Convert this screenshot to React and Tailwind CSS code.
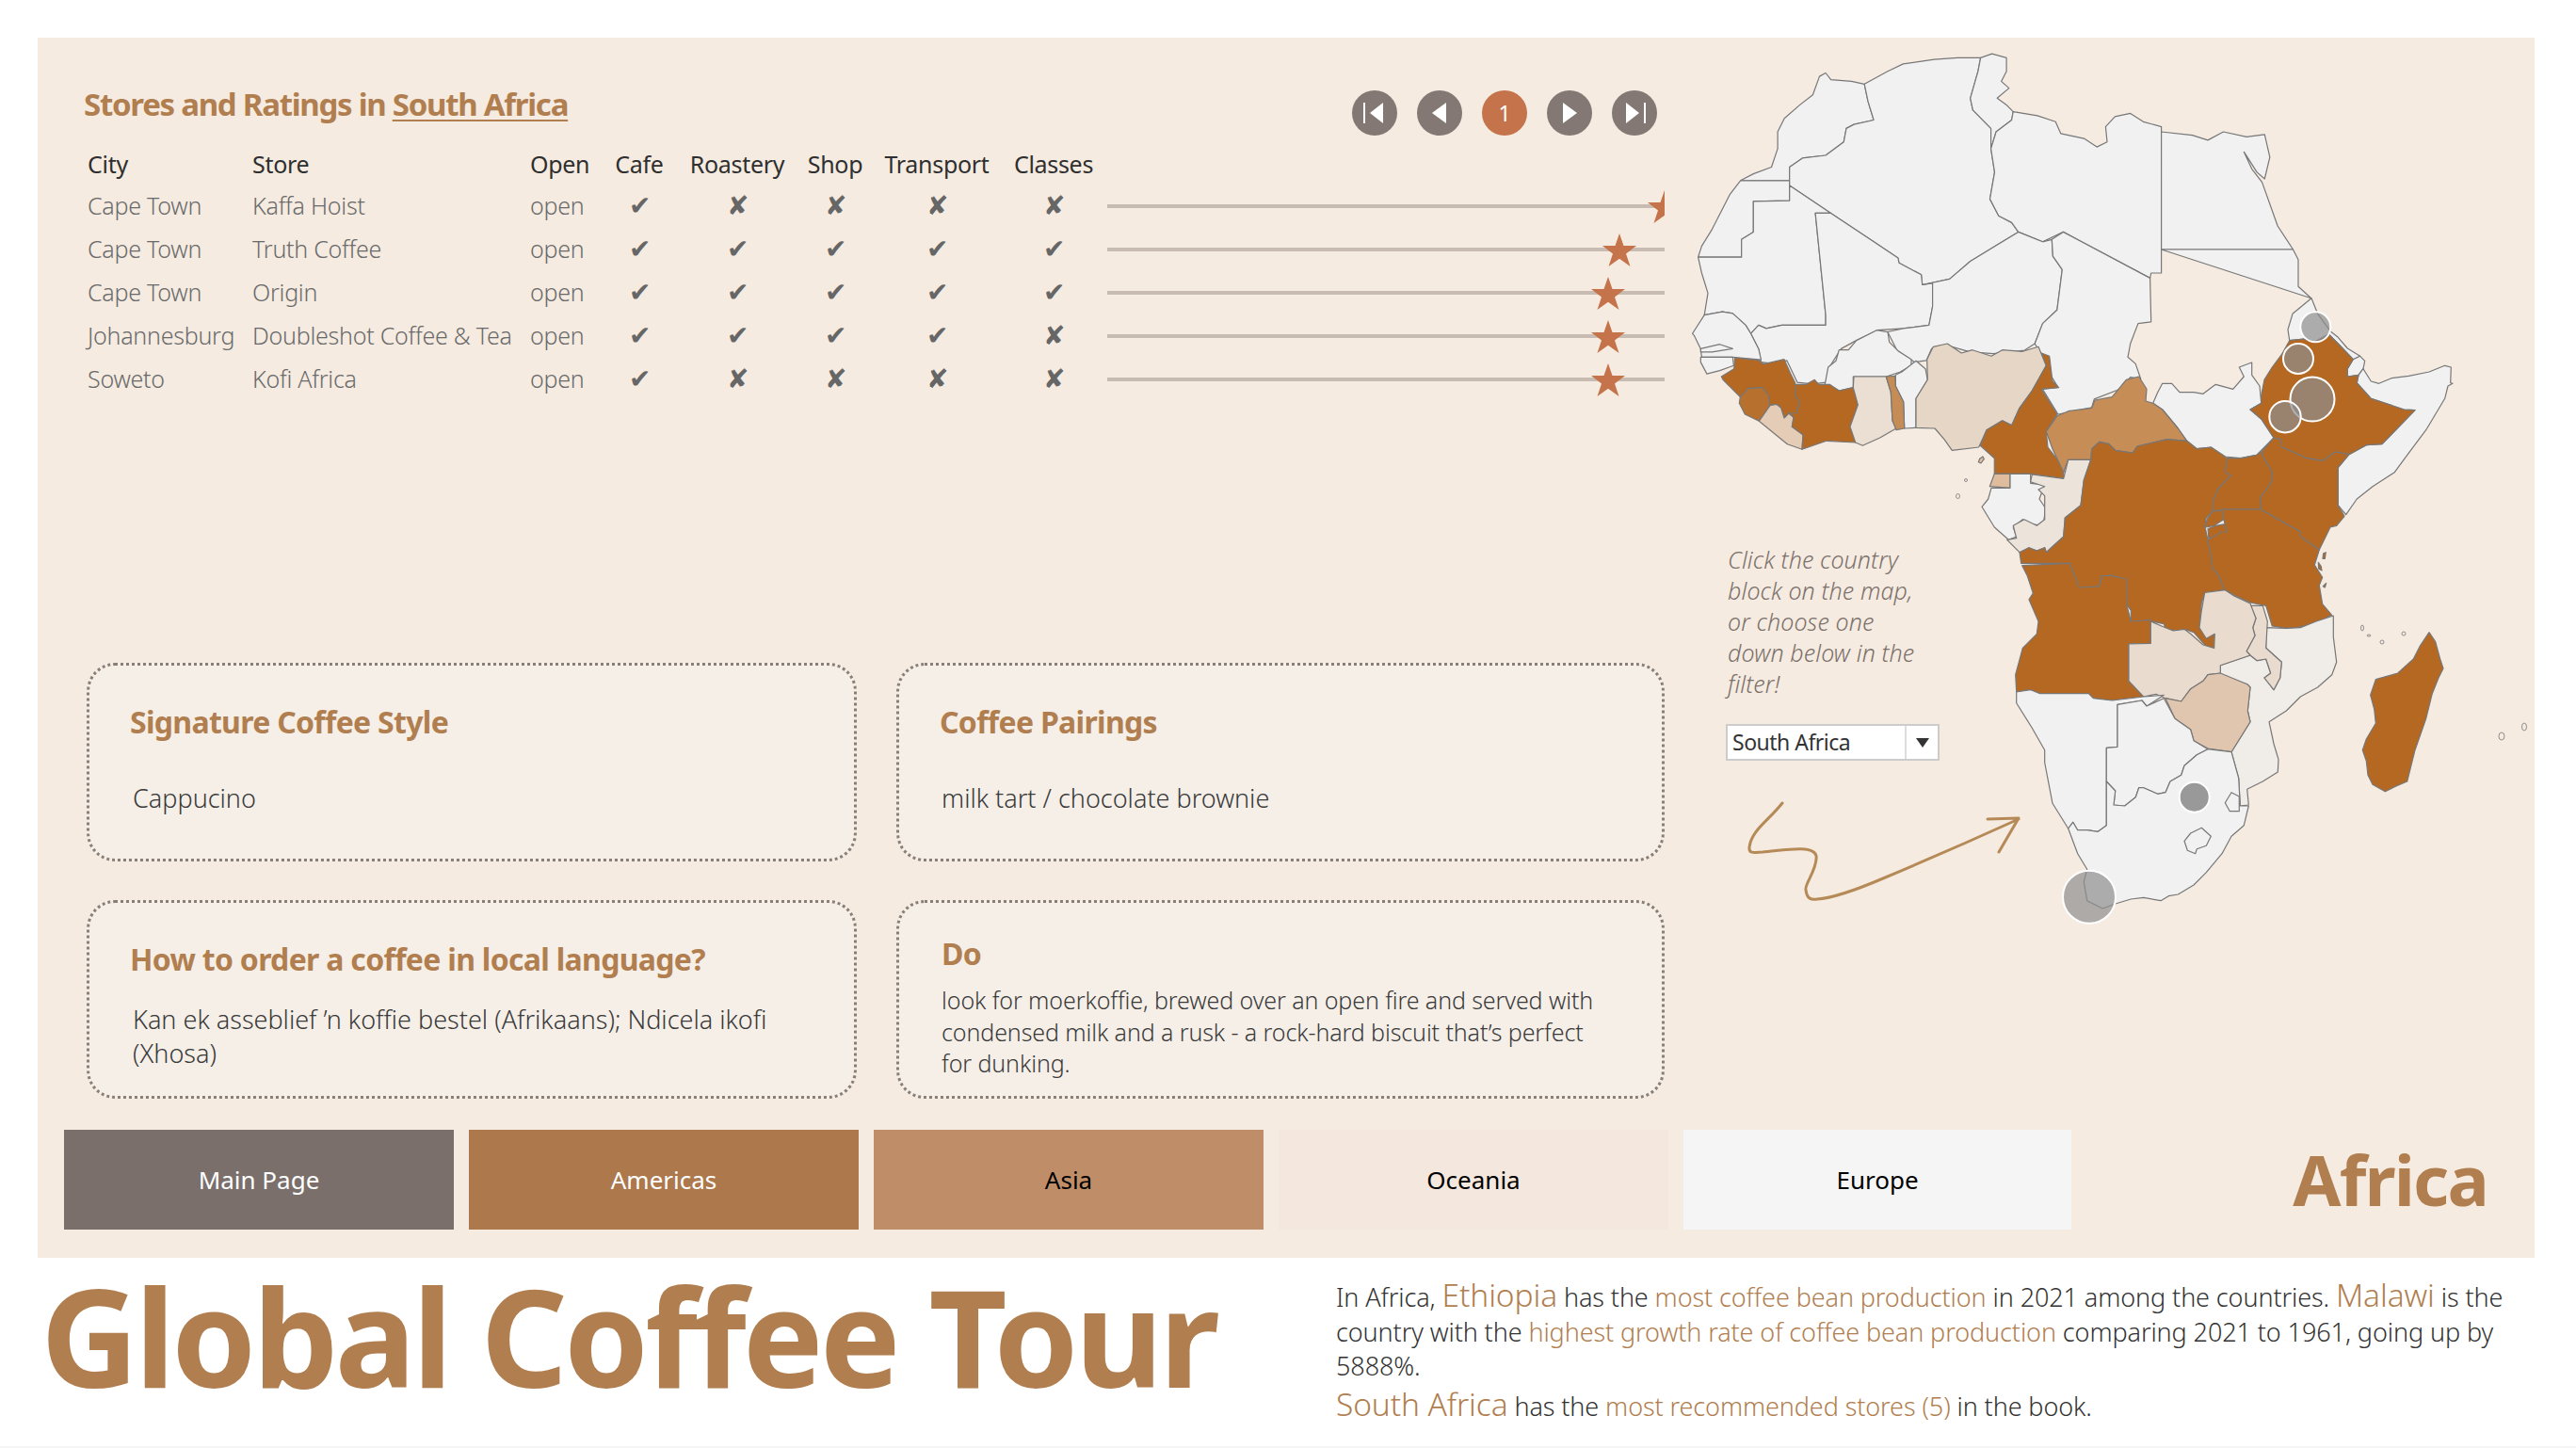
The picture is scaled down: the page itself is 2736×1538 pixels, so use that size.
import React from 'react';

// map outlines were traced from crops of the picture, each crop has its own origin and scale
const conv = (str, ox, oy, sx, sy) =>
  str.trim().split(/\s+/).map((p) => {
    const [x, y] = p.split(',').map(Number);
    return `${(ox + x / sx).toFixed(1)} ${(oy + y / sy).toFixed(1)}`;
  });
const A = (s) => conv(s, 1780, 40, 1.823, 2.8);
const W = (s) => conv(s, 1790, 340, 3, 3);
const E = (s) => conv(s, 2130, 320, 3, 3);
const S = (s) => conv(s, 2100, 560, 3, 3);
const shape = (...parts) => 'M' + parts.flat().join('L') + 'Z';

const PLAIN = '#f1f1f1';
const DEEP = '#b56822';

const countries = [
  // north
  [PLAIN, A('125,425 150,405 185,385 197,330 197,280 210,240 240,200 265,170 278,115 290,105 300,125 340,130 365,138 372,190 383,245 345,258 330,270 325,310 290,350 245,358 220,385 220,425')],
  [PLAIN, A('125,425 220,425 220,485 150,487 150,578 127,600 127,653 43,653 50,620 70,570 90,510 105,465')],
  [PLAIN, A('365,138 410,100 440,78 500,65 545,60 590,60 585,100 570,180 575,215 610,270 610,330 617,400 608,480 625,530 650,550 663,578 570,665 530,718 477,735 475,705 432,670 430,655 300,522 220,440 220,385 245,358 290,350 325,310 330,270 345,258 383,245 372,190')],
  [PLAIN, A('590,60 612,48 640,60 640,100 630,130 645,150 622,180 640,200 653,220 650,245 620,280 610,330 610,270 575,215 570,180 585,100')],
  [PLAIN, A('653,220 700,232 735,250 745,285 790,300 815,325 835,310 832,265 850,235 880,225 905,250 940,265 940,700 920,700 918,715 750,578 710,607 663,578 650,550 625,530 608,480 617,400 610,330 620,280 650,245')],
  [PLAIN, A('940,280 1000,290 1030,305 1060,280 1105,295 1140,288 1150,355 1140,420 1125,400 1100,340 1115,390 1135,430 1165,560 1195,630 940,630')],
  [PLAIN, A('940,630 1195,630 1205,660 1205,740 1230,775'), E('915,40 900,90 905,125 880,170 850,210 825,250 815,300 810,270 785,235 785,195 745,210 760,240 725,280 670,265 630,295 600,290 555,290 530,262 500,262 485,290 470,325 447,318 450,280 425,240 410,205 385,175 405,130 425,70 463,65 463,0'), A('920,715 920,700 940,700')],
  [PLAIN, E('975,-10 995,40 1035,95 1060,115 1090,150 1130,175 1108,185 1060,135 1030,105 985,130 950,120 905,125 900,90 915,40')],
  [PLAIN, E('1108,185 1130,175 1145,190 1140,215 1125,235 1090,240 1090,215')],
  [PLAIN, E('1125,235 1140,215 1165,255 1190,262 1230,245 1285,238 1350,225 1400,205 1420,210 1418,260 1425,262 1410,270 1400,310 1340,410 1280,490 1240,545 1170,590 1120,630 1085,680 1060,650 1060,530 1095,488 1150,458 1200,455 1305,347 1270,345 1165,310 1120,260')],
  [PLAIN, E('470,325 485,290 500,262 530,262 555,290 600,290 630,295 670,265 725,280 760,240 745,210 785,195 785,235 810,270 815,325 780,345 815,375 855,435 800,490 750,500 700,495 655,465 610,470 578,445 550,405 500,345')],
  // sahel and west coast
  [PLAIN, A('150,487 220,485 220,440 300,522 270,522 290,825 290,855 205,855 175,865 160,855 145,880 135,855 110,820 90,815 55,825 62,760 50,700 43,653 127,653 127,600 150,578')],
  [PLAIN, A('270,522 300,522 430,655 432,670 475,705 477,735 497,730 497,800 490,855 440,865 390,870 350,900 320,925 295,985 290,1025 265,1030 235,1025 215,960 190,970 165,965 160,925 145,880 160,855 175,865 205,855 290,855 290,825')],
  [PLAIN, A('477,735 530,718 570,665 663,578 710,607 728,600 730,650 748,690 738,810 710,850 695,910 675,930 615,940 570,935 525,915 495,925 485,960 462,965 428,930 410,875 440,865 490,855 497,800 497,730')],
  [PLAIN, A('728,600 750,578 918,715 920,845 895,850 880,910 875,950 890,970 900,1015 880,1010 860,1045 810,1075 805,1100 740,1120 710,1045 740,1040 720,990 705,935 695,910 710,850 738,810 748,690 730,650')],
  [PLAIN, A('32,880 55,825 90,815 110,820 135,855 145,880 160,925 165,958 110,950 50,950 48,925 35,885')],
  [PLAIN, A('48,925 85,912 110,925 70,935 48,935')],
  [PLAIN, A('48,950 110,950 112,975 85,990 60,1000 48,965')],
  [PLAIN, W('445,205 455,150 480,130 490,95 520,95 545,65 610,32 645,38 650,70 680,100 720,125 720,145 685,165 640,180 535,180 535,215 490,225 470,215')],
  [PLAIN, W('670,175 690,165 735,130 765,155 772,190 735,250 735,343 698,345 695,260 670,210')],
  [DEEP, W('158,120 235,128 250,140 315,125 335,170 350,200 350,240 365,262 355,295 330,297 315,312 305,280 290,268 270,272 265,240 245,215 200,218 175,245 120,190 115,180 155,155')],
  ['#b8702e', W('175,245 200,218 245,215 265,240 270,272 235,322 190,300 172,265')],
  ['#e5ccb6', W('270,272 290,268 305,280 315,312 330,297 345,310 340,340 375,365 372,412 325,395 235,322')],
  [DEEP, W('350,205 385,205 412,190 425,205 460,205 490,225 535,215 550,270 525,340 542,390 450,385 372,412 375,365 340,340 345,310 330,297 355,295 365,262 350,240')],
  ['#ebdfd3', W('537,180 640,180 655,230 660,320 672,345 620,375 565,400 542,390 525,340 550,270 535,215')],
  ['#c68c55', W('640,180 668,178 670,210 695,260 698,345 672,350 660,320 655,230')],
  ['#e6d6c6', W('770,125 790,85 835,75 880,105 915,95 975,115 1010,95 1075,100 1125,85 1150,145 1105,225 1065,280 1040,335 1010,320 960,350 935,405 850,415 825,380 795,345 735,343 735,250 772,190')],
  [DEEP, W('1135,105 1160,115 1170,195 1190,215 1135,220 1160,260 1185,300 1150,355 1155,405 1205,470 1205,505 1100,490 985,490 985,440 940,400 960,350 1010,320 1040,335 1065,280 1105,225 1150,145')],
  ['#c78d57', E('130,415 165,365 200,350 275,340 285,315 340,305 385,250 425,240 450,280 447,318 470,325 500,345 550,405 578,445 515,440 470,450 420,462 405,483 350,475 330,455 300,448 275,470 272,505 200,505 185,545 150,470')],
  ['#dfbc9e', W('985,490 1035,490 1035,535 970,530')],
  [PLAIN, W('1035,490 1100,490 1100,520 1145,525 1128,570 1148,600 1140,655 1100,650 1075,635 1045,660 1055,690 1030,700 985,660 945,595 965,570 975,535 1035,535')],
  ['#ece3db', E('272,505 250,570 240,650 190,690 185,750 130,800 125,785 100,795 75,785 45,800 5,760 35,755 25,715 60,695 100,715 125,695 125,620 105,600 125,590 80,575 85,552 185,565 200,505')],
  // horn and centre
  [DEEP, E('905,125 950,120 985,130 1030,105 1060,135 1108,185 1090,215 1090,240 1125,235 1120,260 1165,310 1270,345 1305,347 1200,455 1150,458 1095,488 1050,480 1012,508 960,500 915,480 880,465 875,440 855,435 815,375 780,345 815,325 815,300 825,250 850,210 880,170')],
  [DEEP, E('815,480 855,435 875,440 880,465 915,480 960,500 1012,508 1050,480 1095,488 1060,530 1060,650 1080,685 1055,715 1035,720 1000,792 940,750 940,735 812,663 812,625 848,575 848,540 825,505')],
  [DEEP, E('705,500 750,500 800,490 815,480 825,505 848,540 848,575 812,625 812,663 690,663 660,670 660,640 675,600 718,555 700,545')],
  [DEEP, E('272,505 275,470 300,448 330,455 350,475 405,483 420,462 470,450 515,440 578,445 610,470 655,465 700,495 705,500 700,545 718,555 675,600 660,640 660,670 640,690 635,715 645,760 655,810 660,850 680,875 700,920 635,930 625,960 618,1040 665,1062 665,1105 640,1100 600,1055 570,1045 555,1052 510,1045 505,1028 465,1020 400,1025 400,985 385,965 385,885 345,885 342,873 305,877 300,908 235,915 205,835 50,835 45,800 75,785 100,795 125,785 130,800 185,750 190,690 240,650 250,570')],
  [DEEP, E('660,670 690,665 695,695 665,715 640,720 635,715 645,690')],
  [DEEP, E('645,725 670,715 700,710 705,735 680,770 650,785')],
  [DEEP, E('690,663 812,663 940,735 940,750 1000,792 985,840 1010,880 1000,905 1010,965 1040,1000 990,1025 930,1040 895,1042 850,1035 830,970 780,960 735,940 700,920 680,875 660,850 655,810 645,760 690,735 705,735 700,710 695,695')],
  // south
  [DEEP, S('143,122 295,115 325,192 390,188 397,155 432,155 475,165 477,250 490,300 553,295 553,370 483,372 483,490 530,540 430,552 370,545 355,530 200,530 170,518 125,525 122,470 145,385 190,340 195,300 165,230 178,210 160,155')],
  ['#f0ece7', S('920,320 985,322 1030,320 1080,300 1135,282 1135,350 1145,430 1130,470 1085,510 1030,540 985,585 930,620 945,690 960,740 958,780 910,810 860,835 865,885 838,888 833,800 810,716 870,620 862,585 870,510 860,500 775,470 775,440 870,408 892,425 920,420 935,465 915,480 945,518 965,480 970,430 920,385')],
  ['#e9dccf', S('870,250 910,250 925,300 920,385 970,430 965,480 945,518 915,480 935,465 920,420 892,425 870,408 858,395 885,345 878,320 888,290')],
  ['#e9dccf', S('725,208 790,200 820,220 870,243 888,290 878,320 885,345 858,395 870,408 775,440 775,465 735,470 720,490 680,515 650,555 600,545 570,532 530,540 483,490 483,372 553,370 553,300 600,320 625,330 660,325 680,340 720,375 755,385 757,340 730,355 708,320 715,265')],
  ['#e0c6ae', S('600,545 650,555 680,515 720,490 735,470 775,465 860,500 870,510 862,585 870,620 810,716 735,705 690,680 680,645 630,610')],
  [PLAIN, S('125,525 170,518 200,530 355,530 370,545 430,552 530,540 595,535 540,570 525,552 447,565 447,700 412,703 412,950 385,970 350,965 320,965 305,940 290,960 240,880 215,750 215,710 175,640 125,560')],
  [PLAIN, S('447,565 525,552 540,570 595,545 630,610 680,645 690,680 735,707 700,725 660,760 650,790 615,810 600,845 575,850 530,830 515,830 505,860 470,888 435,885 440,840 412,810 412,703 447,700')],
  [PLAIN, S('412,810 440,840 435,885 470,888 505,860 515,830 530,830 575,850 600,845 615,810 650,790 660,760 700,725 735,707 810,716 833,800 838,888 865,888 850,950 810,985 780,1040 730,1100 690,1140 640,1170 610,1175 585,1190 530,1180 490,1185 440,1200 400,1215 350,1190 340,1130 350,1090 320,1040 290,960 305,940 320,965 350,965 385,970 412,950')],
  [PLAIN, S('660,1000 680,975 715,958 745,985 730,1015 700,1025 695,1040 670,1030')],
  [PLAIN, S('790,878 810,845 835,858 835,905 805,905')],
  [DEEP, S('1440,335 1460,365 1475,420 1485,450 1470,480 1450,530 1430,610 1395,710 1370,810 1335,825 1300,842 1260,820 1245,790 1240,745 1228,710 1240,675 1270,625 1265,580 1253,535 1270,485 1340,465 1390,420 1410,380')],
  // islands
  ['#dfbc9e', W('938,442 948,435 952,443 942,456 934,452')],
  [DEEP, E('1013,803 1021,800 1018,820 1011,820')],
  [DEEP, E('997,832 1006,845 1008,858 998,852')],
  [DEEP, E('1012,908 1022,898 1018,912')],
];

const specks = [
  [2088, 510, 1.5, 1.5], [2079.5, 527, 2, 2.5], [2509, 667, 1.5, 3], [2516, 675, 2, 1], [2553, 673, 2, 2], [2530, 682, 2, 2],
  [2657, 782, 3, 4], [2681, 772, 2.5, 4],
];

const bubbles = [
  [2459.3, 347.3, 16, '#8e8e8e', 0.7],
  [2441, 381, 16, '#8e8e8e', 0.7],
  [2456, 424, 23.5, '#8e8e8e', 0.7],
  [2427, 442.7, 16.7, '#8e8e8e', 0.7],
  [2330.7, 846.7, 16, '#8a8a8a', 0.85],
  [2219, 952.7, 28, '#8e8e8e', 0.7],
];

const AfricaMap = () => (
  <svg viewBox="1770 40 922 1160" className="block h-[1160px] w-[922px]">
    {countries.map(([fill, pts], i) => (
      <path key={i} d={shape(pts)} fill={fill} stroke="#777777" strokeWidth="1.2" strokeLinejoin="round" />
    ))}
    {specks.map(([cx, cy, rx, ry], i) => (
      <ellipse key={i} cx={cx} cy={cy} rx={rx} ry={ry} fill="none" stroke="#777777" strokeWidth="0.8" />
    ))}
    {bubbles.map(([cx, cy, r, fill, op], i) => (
      <circle key={i} cx={cx} cy={cy} r={r} fill={fill} fillOpacity={op} stroke="#ffffff" strokeWidth="2" />
    ))}
    {/* hand drawn arrow pointing at the map */}
    <path
      d="M1893 853C1878 872 1860 882 1858 900C1857 908 1866 905 1872 905C1890 904 1926 896 1929 909C1931 922 1916 940 1918 945C1919 955 1924 956 1930 955C1945 954 1965 948 2000 933C2050 912 2100 890 2144 870M2111 870L2144 869L2123 905"
      fill="none"
      stroke="#b58a57"
      strokeWidth="3"
      strokeLinecap="round"
      strokeLinejoin="round"
    />
  </svg>
);

const rows = [
  { city: 'Cape Town', store: 'Kaffa Hoist', flags: [1, 0, 0, 0, 0], at: 100 },
  { city: 'Cape Town', store: 'Truth Coffee', flags: [1, 1, 1, 1, 1], at: 91.9 },
  { city: 'Cape Town', store: 'Origin', flags: [1, 1, 1, 1, 1], at: 89.9 },
  { city: 'Johannesburg', store: 'Doubleshot Coffee & Tea', flags: [1, 1, 1, 1, 0], at: 89.9 },
  { city: 'Soweto', store: 'Kofi Africa', flags: [1, 0, 0, 0, 0], at: 89.9 },
];

const cols = 'grid grid-cols-[175px_295px_70px_92px_116px_92px_124px_119px_592px]';

const PageBtn = ({ children, active }) => (
  <div className={`flex h-12 w-12 items-center justify-center rounded-full text-[23px] text-white ${active ? 'bg-[#c4734a]' : 'bg-[#837874]'}`}>
    {children}
  </div>
);

const Card = ({ title, titleClass, bodyClass, children }) => (
  <div className="h-[211px] rounded-[30px] border-[3px] border-dotted border-[#8a7f76] bg-[#f5efe8]">
    <div className={`text-[32px] leading-[40px] font-bold tracking-[-0.7px] text-[#b17e4f] ${titleClass}`}>{title}</div>
    <div className={`text-[#3a3a3a] ${bodyClass}`}>{children}</div>
  </div>
);

const navItems = [
  ['Main Page', 'bg-[#7a6f6b] text-white w-[414px]'],
  ['Americas', 'bg-[#ac784c] text-white w-[414px]'],
  ['Asia', 'bg-[#bf8e69] text-black w-[414px]'],
  ['Oceania', 'bg-[#f4e7de] text-black w-[414px]'],
  ['Europe', 'bg-[#f5f5f5] text-black w-[412px]'],
];

const App = () => (
  <div className="flex h-[1538px] w-[2736px] flex-col bg-white pt-10 font-['Noto_Sans',sans-serif]">
    <div className="ml-10 flex h-[1296px] w-[2652px] flex-col bg-[#f5ebe1]">
      <div className="flex h-[1160px]">
        {/* left side: table and the four cards */}
        <div className="flex w-[1730px] flex-col pl-[49px]">
          <div className="flex items-start justify-between pt-[53px]">
            <h1 className="text-[33px] leading-[36px] font-bold tracking-[-1.27px] text-[#b17e4f]">
              Stores and Ratings in <span className="underline decoration-2 underline-offset-4">South Africa</span>
            </h1>
            <div className="mt-[3px] mr-[10px] flex w-[324px] justify-between">
              <PageBtn>
                <svg width="26" height="24" viewBox="0 0 26 24" fill="white"><rect x="1" y="1" width="2" height="22" /><path d="M22 1V23L8 12Z" /></svg>
              </PageBtn>
              <PageBtn>
                <svg width="18" height="24" viewBox="0 0 18 24" fill="white"><path d="M16 1V23L1 12Z" /></svg>
              </PageBtn>
              <PageBtn active>1</PageBtn>
              <PageBtn>
                <svg width="18" height="24" viewBox="0 0 18 24" fill="white"><path d="M2 1V23L17 12Z" /></svg>
              </PageBtn>
              <PageBtn>
                <svg width="26" height="24" viewBox="0 0 26 24" fill="white"><path d="M4 1V23L18 12Z" /><rect x="23" y="1" width="2" height="22" /></svg>
              </PageBtn>
            </div>
          </div>

          <div className={`${cols} mt-[14px] h-[38px] items-start pl-[4px] text-[25px] leading-[33px] tracking-[-0.3px] text-[#2f2f2f]`}>
            <div>City</div>
            <div>Store</div>
            <div>Open</div>
            <div className="text-center">Cafe</div>
            <div className="text-center">Roastery</div>
            <div className="text-center">Shop</div>
            <div className="text-center">Transport</div>
            <div className="pl-[5px] text-center">Classes</div>
          </div>
          {rows.map((r) => (
            <div key={r.city + r.store} className={`${cols} h-[46px] items-center pl-[4px] text-[25px] font-light tracking-[-0.25px] text-[#6a6a6a]`}>
              <div>{r.city}</div>
              <div className="whitespace-nowrap">{r.store}</div>
              <div>open</div>
              {r.flags.map((f, i) => (
                <div key={i} className={`text-center font-['DejaVu_Sans',sans-serif] text-[28px] leading-[46px] text-[#666666] ${i === 4 ? 'pl-[5px]' : ''}`}>
                  {f ? '✔' : '✘'}
                </div>
              ))}
              <div className="relative h-[46px] overflow-hidden">
                <div className="mt-[21px] h-1 bg-[#c8bbb1]" />
                <svg className="absolute top-[5px] -ml-[19px] h-[37px] w-[38px]" style={{ left: `${r.at}%` }} viewBox="0 0 38 38" fill="#c4734a" preserveAspectRatio="none">
                  <path d="M19 1L23.5 14.5H37L26 23L30.5 37L19 28.5L7.5 37L12 23L1 14.5H14.5Z" />
                </svg>
              </div>
            </div>
          ))}

          <div className="mt-[278px] grid w-[1676px] grid-cols-[818px_816px] gap-x-[42px] gap-y-[41px] pl-[3px]">
            <Card title="Signature Coffee Style" titleClass="mt-[40px] ml-[43px]" bodyClass="mt-[41px] ml-[46px] text-[27px] font-light">
              Cappucino
            </Card>
            <Card title="Coffee Pairings" titleClass="mt-[40px] ml-[43px]" bodyClass="mt-[41px] ml-[45px] text-[27px] font-light">
              milk tart / chocolate brownie
            </Card>
            <Card title="How to order a coffee in local language?" titleClass="mt-[40px] ml-[43px]" bodyClass="mt-[26px] ml-[46px] text-[27px] leading-[36px] font-light">
              Kan ek asseblief ’n koffie bestel (Afrikaans); Ndicela ikofi
              <br />
              (Xhosa)
            </Card>
            <Card title="Do" titleClass="mt-[34px] ml-[45px]" bodyClass="mt-[13px] ml-[45px] text-[25px] leading-[33.5px] font-light tracking-[-0.1px]">
              look for moerkoffie, brewed over an open fire and served with
              <br />
              condensed milk and a rusk - a rock-hard biscuit that’s perfect
              <br />
              for dunking.
            </Card>
          </div>
        </div>

        {/* right side: map with the filter over it */}
        <div className="relative w-[922px]">
          <AfricaMap />
          <div className="absolute top-[538px] left-[65px] w-[260px] text-[25px] leading-[33px] font-light tracking-[0.1px] text-[#7c716c] italic">
            Click the country
            <br />
            block on the map,
            <br />
            or choose one
            <br />
            down below in the
            <br />
            filter!
          </div>
          <div className="absolute top-[729px] left-[63px] flex h-[39px] w-[227px] items-center border-2 border-[#cccccc] bg-white text-[23px] tracking-[-0.5px] text-[#333333]">
            <div className="flex-1 pl-[5px]">South Africa</div>
            <div className="flex h-full w-[35px] items-center justify-center border-l-2 border-[#dddddd]">
              <svg width="14" height="10" viewBox="0 0 14 10" fill="#333333"><path d="M0 0H14L7 10Z" /></svg>
            </div>
          </div>
        </div>
      </div>

      <div className="flex items-center pl-7">
        <div className="flex gap-[16px]">
          {navItems.map(([label, cls]) => (
            <div key={label} className={`flex h-[106px] items-center justify-center text-[26px] ${cls}`}>
              {label}
            </div>
          ))}
        </div>
        <div className="ml-auto pr-[50px] text-[74px] leading-[100px] font-bold tracking-[-1.8px] text-[#b17e4f]">Africa</div>
      </div>
    </div>

    <div className="flex flex-1 items-start">
      <div className="mt-[2px] ml-[43px] w-[1376px] text-[144px] leading-[160px] font-bold tracking-[-3.9px] text-[#b17e4f]">Global Coffee Tour</div>
      <div className="mt-[21px] text-[27px] leading-[36.5px] font-light tracking-[-0.1px] text-[#333333]">
        <p>
          In Africa, <span className="text-[33.5px] text-[#b17e4f]">Ethiopia</span> has the <span className="text-[#b17e4f]">most coffee bean production</span> in 2021 among the countries. <span className="text-[33.5px] text-[#b17e4f]">Malawi</span> is the
          <br />
          country with the <span className="text-[#b17e4f]">highest growth rate of coffee bean production</span> comparing 2021 to 1961, going up by
          <br />
          5888%.
        </p>
        <p className="mt-[3px]">
          <span className="text-[33.5px] text-[#b17e4f]">South Africa</span> has the <span className="text-[#b17e4f]">most recommended stores (5)</span> in the book.
        </p>
      </div>
    </div>
    <div className="h-[2px] bg-[#f5f5f5]" />
  </div>
);

export default App;
